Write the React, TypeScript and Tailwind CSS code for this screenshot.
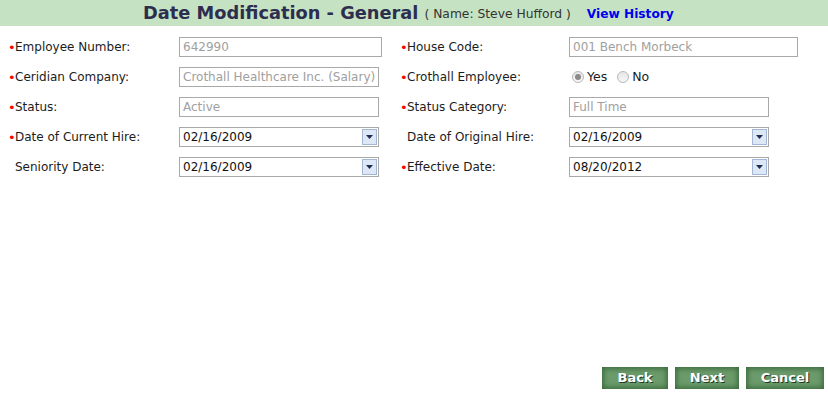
import type { ReactNode } from "react";

function Label({ required, children }: { required?: boolean; children: ReactNode }) {
  return (
    <div className="flex items-center">
      <span className={"w-[7px] text-[#ff0000] text-[13px] leading-none " + (required ? "" : "invisible")}>•</span>
      <span className="text-[12px] text-[#1c1c1c]">{children}</span>
    </div>
  );
}

function TextBox({ value, width }: { value: string; width: string }) {
  return (
    <div className={`${width} h-[20px] border border-[#a9a9a9] bg-white px-[3px] flex items-center text-[12px] text-[#a0a0a0] overflow-hidden whitespace-nowrap`}>
      {value}
    </div>
  );
}

function DateBox({ value }: { value: string }) {
  return (
    <div className="w-[200px] h-[20px] border border-[#a9a9a9] bg-white flex items-center justify-between pl-[3px] pr-[1px] text-[12px] text-[#111]">
      <span>{value}</span>
      <span className="w-[15px] h-[16px] bg-[#dde7f6] border border-[#a4b6d6] flex items-center justify-center">
        <svg width="7" height="4" viewBox="0 0 7 4">
          <path d="M0 0h7L3.5 4z" fill="#1e2d4f" />
        </svg>
      </span>
    </div>
  );
}

function Radio({ checked }: { checked?: boolean }) {
  return (
    <span className="w-[12px] h-[12px] rounded-full border border-[#b8b8b8] bg-gradient-to-b from-[#e6e6e6] to-[#f7f7f7] flex items-center justify-center">
      {checked && <span className="w-[6px] h-[6px] rounded-full bg-[#8a8a8a]" />}
    </span>
  );
}

function Btn({ children, width }: { children: ReactNode; width: string }) {
  return (
    <button className={`${width} h-[22px] bg-[#6b9b6b] shadow-[inset_0_0_5px_2px_#3f6d40] text-white font-bold text-[13px] [text-shadow:1px_1px_0_#243a24] flex items-center justify-center`}>
      {children}
    </button>
  );
}

export default function App() {
  return (
    <div className="w-[828px] h-[408px] bg-white relative" style={{ fontFamily: '"DejaVu Sans", Verdana, sans-serif' }}>
      {/* header */}
      <div className="h-[26px] bg-[#c5e3c2] flex items-center pl-[143px]">
        <span className="text-[17.8px] font-bold text-[#2d2d4f]">Date Modification - General</span>
        <span className="ml-[6px] text-[12.3px] text-[#333] pt-[2px]">( Name: Steve Hufford )</span>
        <a className="ml-[16px] text-[12.2px] font-bold text-[#0000ee] pt-[2px]">View History</a>
      </div>

      {/* form */}
      <div className="pt-[6px] pl-[8px]">
        <div className="grid grid-cols-[171px_221px_169px_auto] auto-rows-[30px] items-center">
          <Label required>Employee Number:</Label>
          <TextBox value="642990" width="w-[203px]" />
          <Label required>House Code:</Label>
          <TextBox value="001 Bench Morbeck" width="w-[229px]" />

          <Label required>Ceridian Company:</Label>
          <TextBox value="Crothall Healthcare Inc. (Salary)" width="w-[200px]" />
          <Label required>Crothall Employee:</Label>
          <div className="flex items-center text-[12.5px] text-[#1c1c1c] pl-[3px]">
            <Radio checked />
            <span className="ml-[3px]">Yes</span>
            <span className="ml-[10px]"><Radio /></span>
            <span className="ml-[3px]">No</span>
          </div>

          <Label required>Status:</Label>
          <TextBox value="Active" width="w-[200px]" />
          <Label required>Status Category:</Label>
          <TextBox value="Full Time" width="w-[200px]" />

          <Label required>Date of Current Hire:</Label>
          <DateBox value="02/16/2009" />
          <Label>Date of Original Hire:</Label>
          <DateBox value="02/16/2009" />

          <Label>Seniority Date:</Label>
          <DateBox value="02/16/2009" />
          <Label required>Effective Date:</Label>
          <DateBox value="08/20/2012" />
        </div>
      </div>

      {/* buttons */}
      <div className="absolute left-[602px] top-[367px] flex gap-[7px]">
        <Btn width="w-[66px]">Back</Btn>
        <Btn width="w-[64px]">Next</Btn>
        <Btn width="w-[78px]">Cancel</Btn>
      </div>
    </div>
  );
}
